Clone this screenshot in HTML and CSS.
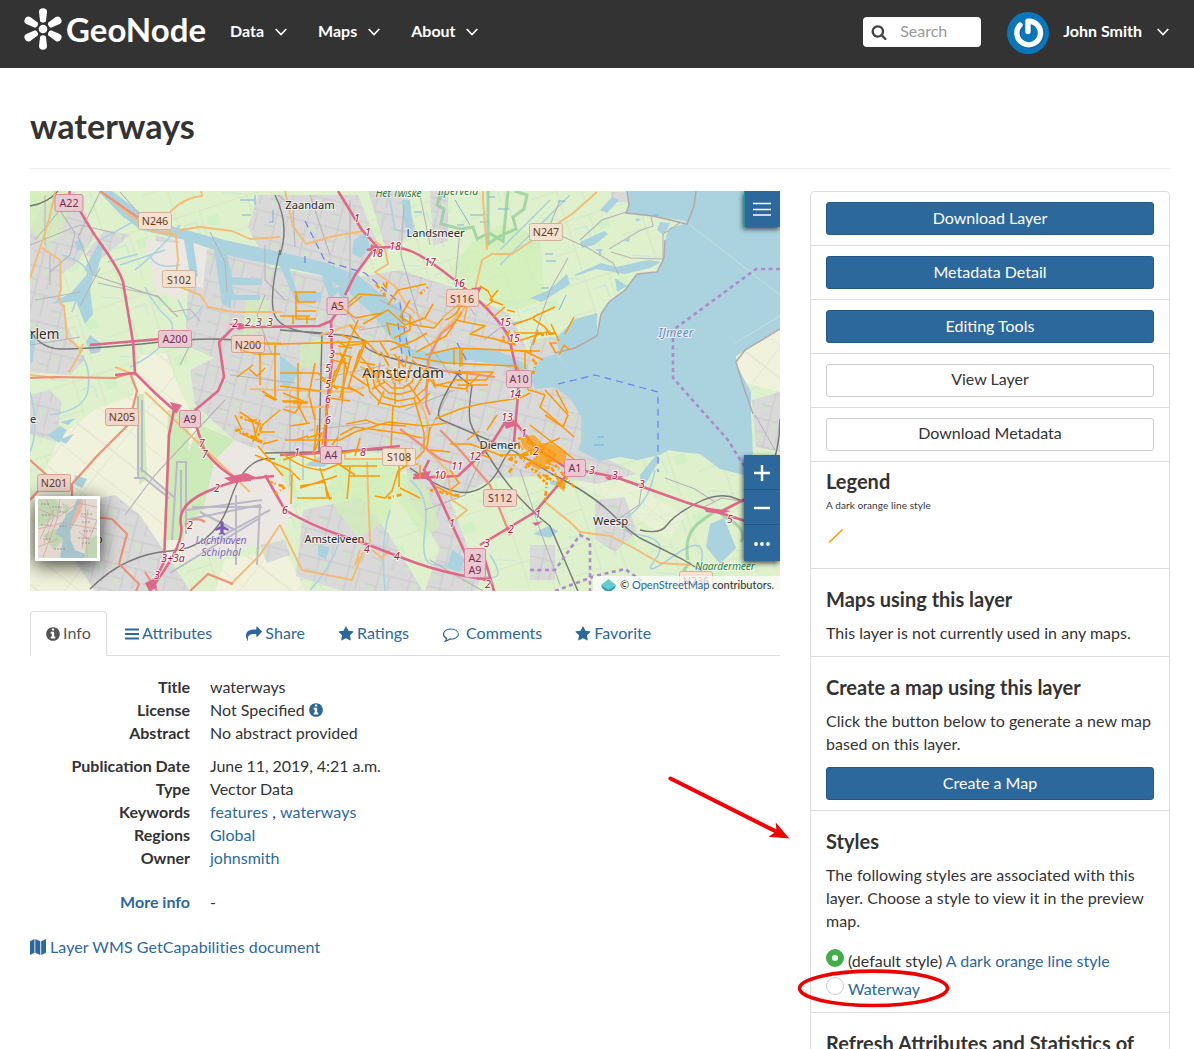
FILE: index.html
```html
<!DOCTYPE html>
<html lang="en">
<head>
<meta charset="utf-8">
<title>waterways - GeoNode</title>
<link rel="stylesheet" href="styles.css">
</head>
<body>
<svg width="0" height="0" class="defs" aria-hidden="true">
  <symbol id="i-info" viewBox="0 0 1792 1792"><path d="M1152 1376v-160q0-14-9-23t-23-9h-96v-512q0-14-9-23t-23-9h-320q-14 0-23 9t-9 23v160q0 14 9 23t23 9h96v320h-96q-14 0-23 9t-9 23v160q0 14 9 23t23 9h448q14 0 23-9t9-23zm-128-896v-160q0-14-9-23t-23-9h-192q-14 0-23 9t-9 23v160q0 14 9 23t23 9h192q14 0 23-9t9-23zm640 416q0 209-103 385.5t-279.5 279.5-385.5 103-385.5-103-279.5-279.5-103-385.5 103-385.5 279.5-279.5 385.5-103 385.5 103 279.5 279.5 103 385.5z"/></symbol>
  <symbol id="i-star" viewBox="0 0 1792 1792"><path d="M1728 647q0 22-26 48l-363 354 86 500q1 7 1 20 0 21-10.500 35.500t-30.500 14.500q-19 0-40-12l-449-236-449 236q-22 12-40 12-21 0-31.500-14.500t-10.500-35.500q0-6 2-20l86-500-364-354q-25-27-25-48 0-37 56-46l502-73 225-455q19-41 49-41t49 41l225 455 502 73q56 9 56 46z"/></symbol>
  <symbol id="i-share" viewBox="0 0 1792 1792"><path d="M1792 640q0 26-19 45l-512 512q-19 19-45 19t-45-19-19-45v-256h-224q-98 0-175.500 6t-154 21.500-133 42.500-105.500 69.500-80 101-48.500 138.500-17.500 181q0 55 5 123 0 6 2.500 23.500t2.500 26.500q0 15-8.500 25t-23.500 10q-16 0-28-17-7-9-13-22t-13.500-30-10.500-24q-127-285-127-451 0-199 53-333 162-403 875-403h224v-256q0-26 19-45t45-19 45 19l512 512q19 19 19 45z"/></symbol>
  <symbol id="i-comment" viewBox="0 0 1792 1792"><path d="M896 384q-204 0-381.500 69.500t-282 187.500-104.500 255q0 112 71.500 213.500t201.500 175.500l87 50-27 96q-24 91-70 172 152-63 275-171l43-38 57 6q69 8 130 8 204 0 381.500-69.500t282-187.500 104.500-255-104.500-255-282-187.500-381.500-69.500zm896 512q0 174-120 321.500t-326 233-450 85.500q-70 0-145-8-198 175-460 242-49 14-114 22h-5q-15 0-27-10.500t-16-27.500q-3-5 6-31l13-18q7-8 46-51t68-86 59-136q-157-89-247.500-220t-90.500-281q0-174 120-321.500t326-233 450-85.500 450 85.500 326 233 120 321.500z"/></symbol>
  <symbol id="i-search" viewBox="0 0 1792 1792"><path d="M1216 832q0-185-131.500-316.500t-316.500-131.500-316.500 131.500-131.500 316.500 131.500 316.500 316.500 131.500 316.500-131.500 131.500-316.500zm512 832q0 52-38 90t-90 38q-54 0-90-38l-343-342q-179 124-399 124-143 0-273.500-55.500t-225-150-150-225-55.500-273.500 55.500-273.500 150-225 225-150 273.500-55.500 273.500 55.500 225 150 150 225 55.500 273.500q0 220-124 399l343 343q37 37 37 90z"/></symbol>
  <symbol id="i-bars" viewBox="0 0 14 14"><path d="M0 1.500h14v2H0zM0 6h14v2H0zM0 10.500h14v2H0z"/></symbol>
  <symbol id="i-map" viewBox="0 0 16 16"><path d="M0 2.200 4.500 0v13.800L0 16zM5.300 0l5 2.200V16l-5-2.200zM11.200 2.200 16 0v13.800L11.200 16z"/></symbol>
  <symbol id="i-down" viewBox="0 0 12 8"><path class="chev" d="M.7 1 6 6.500 11.300 1"/></symbol>
</svg>

<header class="navbar">
  <a class="brand">
    <svg width="40" height="44" viewBox="0 0 40 44">
      <g fill="#fff"><circle cx="20" cy="22" r="4.300"/>
      <path id="petal" d="M16 5Q16 1.300 20 1.300T24 5L22.900 14.500Q20 16.800 17.100 14.500Z"/>
      <use href="#petal" transform="rotate(60 20 22)"/><use href="#petal" transform="rotate(120 20 22)"/><use href="#petal" transform="rotate(180 20 22)"/><use href="#petal" transform="rotate(240 20 22)"/><use href="#petal" transform="rotate(300 20 22)"/></g>
    </svg>
    <span class="brand-name">GeoNode</span>
  </a>
  <nav class="menu">
    <a>Data <svg class="caret"><use href="#i-down"/></svg></a>
    <a>Maps <svg class="caret"><use href="#i-down"/></svg></a>
    <a>About <svg class="caret"><use href="#i-down"/></svg></a>
  </nav>
  <div class="search"><svg class="icon"><use href="#i-search"/></svg><span>Search</span></div>
  <svg class="avatar" viewBox="0 0 42 42"><circle cx="21" cy="21" r="21" fill="#0a76bb"/><path d="M13 13A11.800 11.800 0 1 0 21 9.200V19.500" fill="none" stroke="#075a91" stroke-width="5.600" stroke-linecap="round" stroke-linejoin="round" transform="translate(1 1)" opacity=".6"/><path d="M13 13A11.800 11.800 0 1 0 21 9.200V19.500" fill="none" stroke="#fff" stroke-width="5.400" stroke-linecap="round" stroke-linejoin="round"/></svg>
  <a class="user">John Smith <svg class="caret"><use href="#i-down"/></svg></a>
</header>

<main class="page">
  <h2 class="title">waterways</h2>
  <div class="columns">
    <section class="main">
      <div class="map">
        <svg class="canvas" width="750" height="400" viewBox="30 191 750 400">
          <defs>
            <pattern id="urban" width="31" height="27" patternUnits="userSpaceOnUse" patternTransform="rotate(14)"><rect width="31" height="27" fill="#d9d9d9"/><path d="M0 6H31M11 0V27M0 19H11M22 6V27" stroke="#c8c6c8" fill="none" stroke-width=".9"/><path d="M15 9h4v4h-4zM3 21h4v3H3z" fill="#cde8c0"/></pattern>
            <pattern id="farm" width="74" height="62" patternUnits="userSpaceOnUse" patternTransform="rotate(-18)"><rect width="74" height="62" fill="#def1cc"/><path d="M0 14H74M26 0V62M50 14V62M0 44H26" stroke="#d0dfc5" fill="none" stroke-width=".8"/><path d="M4 4l18 7M31 24h13v13" stroke="#b9dcdd" fill="none" stroke-width=".7"/><path d="M55 22h12v10H55z" fill="#d2f0c6"/></pattern>
            <pattern id="polder" width="46" height="52" patternUnits="userSpaceOnUse" patternTransform="rotate(38)"><rect width="46" height="52" fill="#f0f2dc"/><path d="M0 0H46M0 0V52M0 26H46" stroke="#d8dbc9" fill="none" stroke-width=".9"/></pattern>
          </defs>
          <rect x="30" y="191" width="750" height="400" fill="url(#farm)"/>
          <g fill="url(#polder)">
            <path d="M140 355l26-2 14 37 32 65-30 90-40 46H30v-85l30-70 35-26 38-15Z"/>
            <path d="M780 329 745 350 736 362 742 382 780 392ZM225 560l60-10 20 41h-90Z"/>
            <path d="M575 470l50 10 60 35-15 25-60-40-30-15Z" fill-opacity=".5"/>
          </g>
          <g fill="url(#urban)">
            <path d="M30 230 42 205 75 192 95 235 78 262 60 275 62 300 68 328 84 360 70 375 30 372ZM30 395l20-5 12 12-6 40-26-8Z"/>
            <path d="M85 255l20-25 25 5-30 25ZM155 235l115 30-10 105-30-5-45-20 4-75-30-15Z"/>
            <path d="M258 195h100l20 50-20 30-95-18-15-30ZM368 191h38l10 40-30 20ZM430 191h18v50l-15 5Z"/>
            <path d="M248 262 340 280 400 270 460 290 510 315 530 355 545 400 560 440 560 475 495 478 450 500 480 580 475 591 425 591 440 548 410 500 405 455 340 450 290 455 240 445 195 405 190 370 230 350Z"/>
            <path d="M303 510l58-12 27 35 35 58h-80l-47-15ZM60 505l55-10 25 20 30 45 20 31H95l-20-30ZM595 500l30-3 12 35-22 20-20-13Z"/>
            <path d="M530 340l28-4 22 45 25 36 2 42 30 15-40 10-55-10ZM610 192h18v9l-15 2ZM752 400l28-8v60l-24-5Z"/>
            <path d="M120 555h15l4 5-4 12-12 3ZM260 545l25-5 5 15-23 8ZM530 545h25v35h-25Z"/>
          </g>
          <path d="M30 191h40l-8 45-20 10-12-20ZM335 455l60 8-5 55-32 20-30-40ZM240 455l50 3 10 50-30-5ZM395 470l30 15 15 40-15 15-30-45ZM300 345l24-8-5 28-20 4ZM245 300l25 0-5 30-22 5ZM470 245l30-20 40 10 5 65-30 10-45-15-20-25Z" fill="#d2edb8" fill-opacity=".75"/>
          <path d="M210 430l60 25 25 45-15 40-95 20-10-35ZM145 240l55 5-18 53-25-5ZM178 230l30 12-5 46-18-3Z" fill="#ebe7e2"/>
          <path d="M168 410h22l-6 130h-20ZM136 394l8 0 3 85-8 6ZM200 425l35 15-20 20-12 50-25 20 2-60Z" fill="#cdebb8"/>
          <!-- water -->
          <g class="water">
            <path d="M627 191 629 205 626 213 653 216 684 221 688 223 669 228 665 240 664 258 657 273 637 274 625 290 609 302 601 313 597 333 583 339 574 330 575 319 570 332 576 360 576 371 565 368 557 354 542 358 529 374 535 389 554 387 570 398 582 418 583 437 578 450 600 461 620 457 637 460 660 455 669 450 680 452 700 454 720 469 744 475 753 454 751 414 751 392 737 366 736 356 780 329V191Z"/>
            <path d="M98 191h14l38 29 65 18 65 14 47 11 33 14 37 30 14 42 19 3 40-4 30 4 28 13v10l-28-10-30-5-30 5-35-9-12-15-22-28-27-25-24-13-42-9-43-9-50-17-44-10-20-15Z"/>
            <path d="M575 319l22-6 0 18-22 42-12-5-7-30Z"/>
            <path d="M183 234h9l6 42-7 4ZM212 236l12 4 8 37 30 2v6h-30l3 10h25v5h-29v8l-9-4ZM276 257l9-2 12 37h24v10h-25Z"/>
            <path d="M322 278l7-4 5 14 16-3-3 7 5 14-8-3-6-11-8 7ZM352 270l12 10-8 8-10-10ZM354 240l12-8 4 16-10 10-8-5ZM360 292l18 10-6 10ZM385 310l14-8 8 20-8 14Z"/>
            <path d="M30 330l6 4-3 28-3 1ZM72 292l16-19 7-4-5 20 3 25-8 10-9-23-25 3ZM84 270l15-28 5 2-8 32ZM74 242l7-2 4 8-7 3ZM90 335l12 9-2 8-9 2-5-12ZM58 440l16-6-8 10ZM75 475l12 4-5 9-8-4ZM305 465l20-12 8 8-10 6-14-1ZM48 435l12-9 7 4-8 13ZM60 422l16-4-8 7Z"/>
            <path d="M530 298l19-8 18-16 3 10-28 18ZM574 275l27-12 15 4 32-7 13 2-11 6-25 6-29-5-20 7ZM600 210l12-13 7 3-12 13ZM580 242l24-11 4 3-14 11-12 3ZM595 249l8 0-3 4ZM660 222l10 1-6 12-7-5ZM635 218l6 1-4 3ZM624 241l6-4-1 5ZM615 278l12 8-10 6ZM452 549l13 10-5 13-13-4ZM318 545l12 2-4 12-8-3ZM640 475l16-20 4 4-19 33ZM710 524l14-6 12 30-16 16-14-17ZM533 534l15-8 10 5-8 7ZM550 480l16 3-3 5-13-4ZM402 200l8 0 3 30-8-3ZM280 355l20 16-13 20-7-10Z"/>
            <path class="stream" d="M275 270l30-10M100 240l40-22M62 255q40 12 18 35l-8 22M180 225q-20 25-45 45M108 262l30-8M145 287q10 20 22 30t-2 25-35 25M30 452q10-25 0-60M50 415q35-5 38-25t-6-35M410 480q20 15 15 50t10 35 45 10 10-20M582 400v50M655 470q-5 30-25 45t10 20 15 25 20-5 25 15M390 510q-10 30-5 81M340 540q-10 30-30 50M500 250l50-50M500 265l70-70M390 200l5 30 40 5M180 265q-25 5-30-10M165 250l-45 15M203 305q-5 10-15 15l-10-20"/>
          </g>
          <path class="ditch" d="M240 200h14m-12 15h9m18 7h4m-18-27v10m18 5v12M385 195h7m22 17h8m35 13h7m16-3h9m-1-25h7m3 12h11M470 215h13M545 254h8m-7 7h10M541 288h8M600 252v4M558 201h7M654 215h5M566 295l-7 15M597 437h7m-10 8h10M455 200l15 25"/>
          <!-- nature reserve edge -->
          <path class="reserve" d="M441 191l-4 14 7 4-3 15 20 5 12-2 4 12 12-6 14 8 5-50M515 191l12 4-3 14-11 8 3 12-18 8-10 7V191M688 560q-5-25 12-38t18-11 15 11 8 20M690 562l-6 8 15 16h55"/>
          <!-- minor roads -->
          <g class="minor">
            <path d="M55 203l20 30-5 22-20 17M100 192l-22 45 15 38 65 22 20 20M120 192l35 40M100 268l-20 38M98 283l60 13 14 16 18-3 10 12M190 345l-10 20M90 344l60-3M285 300l-20-20v-35M265 295l-8 20 15 40M290 391v95M315 380l70-15M310 430l60-7M335 460l10-80M303 430v50M340 300l20 30 30-5M380 300l30 15 40 60M405 410l50-20M420 450l30-60M530 350l20-60 18-32M560 200l-12 30 40 18 25 15 6 12M580 240l22-20 24-8M609 249l30-18 14-5-2-10M611 252l20 6 32 1 0-25 18-12M484 340l20-15 24-5M430 560l25 15 28 16M425 510l40-15 15-35M520 470l20 60 20 55M620 478l22 7-3 20-22 15 15 15M665 478l30 11 20 13M702 508l20-10 30 5M755 415l20 35"/>
            <path d="M210 232l15 30 2 30M278 195l15 12 2 40M420 195l10 50M404 205l-3 50 20 70M460 230l-5 55 20 30M350 200v90M310 195l20 60M230 375l65 8M440 200l5-8"/>
            <path d="M30 245l50-20 35 8M50 255v30M35 300l45-8M30 345l50-8M45 195v50M60 210l-25 30M225 400l-70 75-30 40"/>
          </g>
          <path class="coast" d="M627 191 629 205 626 213 653 216 687 224 694 206 696 191M665 240l-1 18-7 14-20 2-12 16-16 12-8 12-4 22-22 12-20 5M780 329 745 350 736 362 742 382 753 414"/>
          <path class="ferry-route" d="M690 225l90 70M735 343l45-27"/>
          <!-- railways and runways -->
          <path class="runway" d="M138 396v82M142 400v72M134 478h10l25 20M140 468l35 30M172 540l5-78h9v72M181 470v50M187 510l75-10M185 520l75-15-3 60M236 495v70M170 573l90-55M192 507h70M200 512l35 18M205 545l65-35"/>
          <path class="rail" d="M58 191q-10 12-28 15M30 330q10 18 30 19 35 0 100-7t100 2M280 250q-12 50-5 66t50 18 40 10 50 20 45 10 12 12q-4 25-2 35t25 45 55 60l30 70M280 330l42 3-3 120M275 195q15 30 5 60M265 453l50-1 80-3M90 589q35-35 80-38t60-50 45-42M410 468q40 28 60 24t30-25 20-24M460 370q-30 45-18 50t70 30l40 24q40 20 60 40t30 25l40 20 20 12M640 530q20 5 27-5t30-22 40-4 30-20 13-60"/>
          <!-- secondary roads -->
          <path class="secondary" d="M55 191q-3 20-11 45l-14 42M42 248l18 12 1 30q-6 10 3 16l3 32 15 12-13 22M30 375l25 3M83 344l-3 8M170 212q15-15 32-16l-1-5M101 191l30 25 20 15 25 4 2 25-3 25 25 10 8 12 25 5h48M176 235l-12-6M180 230l20-3 32 4 18 8 30-2M285 191l8 35 13 18 28-8 30-5M375 241l10 8 3 15-13 8 20 14 12 20 15 12 15 6M487 250l-4-50V191M475 290l7-30 10-6h20l60-40 25-22M475 290l-12 20-20 20-10 12M250 389l100 3 15-5M285 407h45M315 408v55M367 462l3 80-15 23 5-15M337 449l8 5v5h48M427 448q5-30-10-50M425 448l22 22 5 30 15 10-12 10M280 525l22 45 25 5 25 5 12-30M390 550l-8 8-10-8M545 502l25 20 10 10 30 4 20 10 30 17 30 2M230 585l30-30 20-30M135 375l-20-8M320 335l30-10 15 3M145 392l105 100"/>
          <path class="primary" d="M100 191l40 28M30 378l25-1 60 1 15-5 7 18-5 20 0 10-35 35-25 28 0 30 40 5 15 15-8 30 20 20-5 12M30 460l20 18M400 429l40 30 15 5M440 430l20 20 30 35 20 50M435 345l-7 15-2 45 4 10M455 322l-14 12-10 18M435 370l30 3 30 4M30 500l18-20M185 525q10-10 20-3M190 591l18-17 25 10M145 572l12 19"/>
          <!-- motorways -->
          <path class="motorway" d="M70 191l-5 20M76 203q10 20 27 44t20 35l10 60 2 31 20 20 19 17-5 25-5 127-20 41M135 373l-20 2M194 411l24-20 6-14-5-35 15-15h25l60-1 12-5 14-20M90 345l70-6M338 191l24 39 20 22M377 245l-22 30-10 20M331 320l1 40-5 45-2 45M367 250q30-8 52 5t50 37 40 45l10 45-5 60M280 455l60-3 60-6M429 460l-5 10 12 20 30 65 20 15M480 545l55-33 30-35 5-8M413 478l45-2 32-30 16-25M196 425l8 25q15 20 35 30l35-4M150 590q35-45 31-65t25-33 45-12M265 475l20 35q25 15 55 25t60 22 60 18 30 4M515 422l20 25 30 20 50 10 70 25 45 14 15 5M722 511l35-18M485 560l9 31"/>
          <g fill="#dc6989"><path d="M371 244l10 6-1 6-10-5ZM224 478l22-5 12 5-25 5ZM413 474l18-3-4 8-12-2ZM503 422l10-3 4 6-11 4ZM703 507l28 4-10 3-15-2ZM532 523l11-2-7 5ZM170 402l12 3-6 9ZM472 288l10-1-3 6-9-2ZM229 324l12-1 8 4-10 3ZM605 477l18-1-5 4-10 0ZM480 578l11-1-5 5ZM145 583l10-5 2 10-8 3Z"/></g>
          <!-- boundaries and ferries -->
          <path class="boundary" d="M780 269h-24l-83 61v48l55 62 16 26M530 570h25l25-35 10 5v51M555 591l40-15 30-7 35 25"/>
          <path class="ferry" d="M305 221l20 40 40 12 35 30 6 35 4 18M558 384l37-9 63 17v80M305 256v10M457 343l10 18M398 323l5 40"/>
          <!-- waterways layer -->
          <g class="layer">
            <path d="M294 292h22M316 302h-18l-2-10v27h20M296 311h20M280 316h30M293 316v8M307 316v8M246 344h35M260 345v40M275 345v55M258 354h22M249 369l8 7 8-8M237 377l16-12M265 395l10 5M330 297l25 21 27-5M347 308l15-12M350 325l15 20M345 306l14-12 27 2M363 324l25-14 17 15 20-7 8-14M388 305l10-15M398 290l28-6M410 300l-10 17 14 8 20 3 9-10M383 283l3 5 1-6M390 335l-3-12 20 5M410 315v15l-16 8"/>
            <path d="M452 300l6-4 5 6-7 12M445 320q15-5 16-20M455 320l30 6-15 8 25 5 15 5M480 286l8 5 5 10-9 7M498 290l-8 10 13 5M505 307l-12 10M515 312l-8-2M513 325l22-8M514 333h30M515 342l22-7M520 351h20M533 319l12 8 5 8M538 330l-5 15M533 317l22-10M530 337l20-6M557 343h-7l6 10M559 355l5-10 6 5M565 334l9-17M551 324l8 17"/>
            <path d="M390 350l25-10 12-7M416 352l30-16 16-24M280 344l110-3 20 7M380 356l-15-16-7 18M412 357l35 6 70 3 12 25M425 355l30-7 70 3 18 9M430 370l5 15 30 4 15-15M454 348v17M460 349v18M462 348v18M525 351v18M450 372h43l-7 8h-32M458 385h30M467 372v20"/>
            <path d="M358 320l-7 17-17 45M340 334l10 5-18 42M337 341l8 5 22-3M338 346l14 2M334 353l18 4M332 360l18 4M280 373h38l12 12 25 5M298 363v38h-16M315 363l-6 32 6 25M283 402h25M345 358l-3 45M335 370l-8 40-5 35M340 352l8 20M351 356l-11 42M360 350l-12 38M366 342l-12 30M380 342l10 16M394 354l10 13M285 440h55l15-8 34-10 35 4 23-3M393 406l-2 40M340 435l15-8 45 6 22 5"/>
            <path d="M372 374l3 13 9 10 14 4 16-3 11-9 5-12M376 372l4 13 9 8 12 1 13-4 8-12M381 370l3 11 8 7 11 0 9-6 4-10M387 368l3 9 9 4 9-5 2-8M366 376l4 16 11 11 18 4 19-4 12-10M395 383v21M384 391l-6 14M408 384l13 18M371 374l18-2M372 389l13-7M424 369l10 6M399 356v12M407 356l-2 11M389 366l-8-14M375 365l-15-3M433 386l22-5M412 360l14 12 10 16M350 374l18 12M348 386l16 10M360 356l12 14"/>
            <path d="M414 398l10 35v18l-10 10-16 10-6 20-7 7-10-2M430 427l-3 20M435 419l25-10 20-5 40-6 10-5M450 444l20 0 30 11 20 0 40-17M475 452l17 7M430 450l20 2M450 470l9 13-10 8M435 486l20 10M420 465v14M487 430l10-15M467 440l12-9M399 465v22M400 488l20 10M398 461l5 5 15-2"/>
            <path d="M240 412l15 10M235 415l7 15M245 420h12M240 433l22 10M252 420l5 20M260 420l-7 22M260 432h15M263 444l15-4M280 410l-20 17M258 446l25 30M255 455l35 15 10 10M283 460l15-5 25 8 15-5M282 453q20 17 42 17l18-7M292 474l-1 30M300 486l25-4 2 15M297 498h35M320 468l10 32M300 488l37-12M350 476h30M350 467l-3 32M342 466h35M337 454l23-4M332 445l6-8M340 450v15l15 10M262 391l15 9"/>
            <path d="M530 390l15 5-5 12 14 12 20 18M545 390l23 25-5 12-18-12M556 390l12 23M530 425l45 35"/>
            <path d="M318 425l-5 30M297 403l10 20M307 438l15-5-7 17M295 440l13-4M360 438l-5 18M280 386l40 5M283 393l20 8-8 12-12-4M293 403h15M290 426l20-3M330 398l20 3M320 379l18 10M346 424l20-4 10 4 30 2"/>
          </g>
          <path d="M520 437l14-2 8 8 15 2 10 7-2 12-16-2-10 8-10-6 8-8-14-8ZM556 476l10 6-2 10-6-6Z" class="dense"/>
          <path class="speckle" d="M518 438l38 15-10 15-25-12 20-5-16 17M540 445l18 35M520 457l25 25M535 470l30 18M550 450l-5 50M555 465l19 22M510 458l30-6M240 417l22 8-5 14-20-10M235 430l30 13M270 482l15 5-10 7M500 455l16 7-8 12M430 490l30 6M502 340l12 4-5-12-6 6M385 295l-10-12M420 294l8-7M530 350l4 12M536 362l-3 12M541 335l15-2M388 498l15-4"/>
          <!-- road shields -->
          <g class="shield">
            <g class="a"><rect x="55" y="194.500" width="28" height="17"/><rect x="158.500" y="330.500" width="33" height="17"/><rect x="327" y="297.500" width="21" height="17"/><rect x="506.500" y="370.500" width="25" height="17"/><rect x="179.500" y="410.500" width="21" height="17"/><rect x="320.500" y="446.500" width="21" height="17"/><rect x="564.500" y="459.500" width="21" height="17"/><rect x="464.500" y="548.500" width="21" height="29"/></g>
            <g class="n"><rect x="231.500" y="335.500" width="33" height="17"/><rect x="105.500" y="408.500" width="33" height="17"/><rect x="37.500" y="474.500" width="33" height="17"/><rect x="446.500" y="289.500" width="32" height="17"/><rect x="483.500" y="489.500" width="33" height="17"/></g>
            <g class="s"><rect x="138.500" y="212.500" width="33" height="17"/><rect x="162.500" y="270.500" width="33" height="17"/><rect x="529.500" y="223.500" width="33" height="17"/><rect x="382.500" y="448.500" width="33" height="17"/><rect x="679.500" y="571.500" width="33" height="17"/></g>
          </g>
          <g class="ref a-text"><text x="69" y="207">A22</text><text x="175" y="343">A200</text><text x="337.500" y="310">A5</text><text x="519" y="383">A10</text><text x="190" y="423">A9</text><text x="331" y="459">A4</text><text x="575" y="472">A1</text><text x="475" y="561.500">A2</text><text x="475" y="573.500">A9</text></g>
          <g class="ref"><text x="248" y="349">N200</text><text x="122" y="421">N205</text><text x="54" y="487">N201</text><text x="462" y="303">S116</text><text x="500" y="502">S112</text><text x="155" y="225">N246</text><text x="179" y="284">S102</text><text x="546" y="236">N247</text><text x="399" y="461">S108</text><text x="696" y="585">N236</text></g>
          <g class="layer over"><path d="M248 343h33M240 350l20 5M335 302l15 12M443 317l15-12 9 2-3 14M405 448l2 18M545 462l15 6"/></g>
          <!-- exits -->
          <g class="exit"><text x="235" y="327">2</text><text x="248" y="326">2</text><text x="259" y="326">3</text><text x="270" y="326">3</text><text x="357" y="222">1</text><text x="368" y="236">1</text><text x="377" y="257">18</text><text x="395" y="250">18</text><text x="430" y="266">17</text><text x="459" y="287">16</text><text x="505" y="326">15</text><text x="514" y="342">15</text><text x="515" y="398">14</text><text x="507" y="421">13</text><text x="331" y="337">2</text><text x="332" y="358">3</text><text x="328" y="372">5</text><text x="328" y="388">5</text><text x="328" y="403">6</text><text x="328" y="424">6</text><text x="297" y="456">1</text><text x="363" y="456">8</text><text x="440" y="479">10</text><text x="457" y="470">11</text><text x="475" y="460">12</text><text x="524" y="437">1</text><text x="536" y="455">2</text><text x="592" y="474">3</text><text x="615" y="479">3</text><text x="642" y="488">3</text><text x="730" y="523">5</text><text x="202" y="447">7</text><text x="205" y="458">7</text><text x="217" y="492">2</text><text x="190" y="529">2</text><text x="182" y="551">2</text><text x="173" y="562">3+3a</text><text x="157" y="579">3</text><text x="285" y="514">6</text><text x="367" y="553">4</text><text x="397" y="560">4</text><text x="488" y="588">2</text><text x="487" y="547">3</text><text x="511" y="533">2</text><text x="452" y="527">1</text><text x="538" y="518">1</text></g>
          <!-- places -->
          <g class="place"><text x="310" y="209">Zaandam</text><text x="435.500" y="237" textLength="58">Landsmeer</text><text x="334.500" y="543" textLength="60">Amstelveen</text><text x="610.500" y="525">Weesp</text><text x="500" y="449">Diemen</text><text x="403" y="378" class="city" textLength="82">Amsterdam</text><text x="30" y="339" class="start">rlem</text><text x="30" y="423" class="start small">e</text><text x="96" y="543" class="start small">o</text></g>
          <g class="layer over"><path d="M362 378l12-10M368 366l12 16M380 363l-3 20M389 369l5 15M411 364l-5 18M430 362l-10 18M360 367l10 3M400 384l-3-15M518 442l5 8"/></g>
          <g class="park"><text x="398.500" y="197" textLength="46">Het Twiske</text><text x="458" y="195">Ilperveld</text><text x="725" y="569.500" textLength="60">Naardermeer</text></g>
          <g class="lake"><text x="676" y="337" textLength="35">IJmeer</text></g>
          <g class="airport"><text x="221" y="544" textLength="51">Luchthaven</text><text x="221" y="556">Schiphol</text><path d="M222 521l1.300 1.300V526l5 3v1.500l-5-1.500v3.500l1.700 1.200v.8l-3-.8-3 .8v-.8l1.700-1.200V529l-5 1.500V529l5-3v-3.700Z"/></g>
        </svg>
        <a class="map-menu"><svg width="18" height="14" viewBox="0 0 18 14"><path d="M0 1.500h18M0 7.500h18M0 13h18" stroke="#fff" stroke-width="1.500"/></svg></a>
        <div class="zoom">
          <a><svg width="16" height="16" viewBox="0 0 16 16"><path d="M8 0v16M0 8h16" stroke="#fff" stroke-width="2.400"/></svg></a>
          <a><svg width="16" height="16" viewBox="0 0 16 16"><path d="M0 8h16" stroke="#fff" stroke-width="2.400"/></svg></a>
          <a><svg width="18" height="16" viewBox="0 0 18 16"><g fill="#fff"><circle cx="3" cy="8" r="1.900"/><circle cx="9" cy="8" r="1.900"/><circle cx="15" cy="8" r="1.900"/></g></svg></a>
        </div>
        <div class="overview">
          <svg width="59" height="59" viewBox="0 0 59 59"><rect width="59" height="59" fill="#e2dad0"/><path d="M0 0h18l6 12-12 10L0 28ZM5 36l15-7 6 10-10 12ZM48 42l11-6v23H46ZM24 4l8 3-4 12Z" fill="#c0d5b2"/><path d="M39 0h5l-5 20-7 12 1 10 4 9 10 4v4H22l3-20-8-4 12-20 6-5Z" fill="#a7c4ca"/><path d="M46 1l-3 12-10 15 2-10 8-17Z" fill="#eab69e"/><path d="M0 10l20 8 20-14 19 4M5 58l15-40M0 30l25-6 34 6M8 0l8 18-10 26M42 17l17 4-8 20-10-8M22 0l-3 20M47 0l2 58M0 48l20-8M2 40l14-30M50 10l-6 40" fill="none" stroke="#d3a5a3" stroke-width=".8"/><path d="M3 5h8m3 3h10m-20 8h9m8-3h7m-25 13h10m8 1h7m15-12h11m-10 8h9m-8 9h10m-50 8h8m3 10h11m13-11h12m-8 5h8" stroke="#85828a" stroke-width=".7" stroke-dasharray="2 1"/></svg>
        </div>
        <div class="credit"><svg width="15" height="14" viewBox="0 0 15 14"><path d="M0 6l7.500-6L15 6 7.500 12Z" fill="#64cbd2"/><path d="M0 6l7.500 5L15 6l-1.500 3.500L7.500 14l-6-4.500Z" fill="#2ca0b2"/></svg><span>© <a>OpenStreetMap</a> contributors.</span></div>
      </div>

      <ul class="tabs">
        <li class="active"><svg class="icon"><use href="#i-info"/></svg>Info</li>
        <li class="t-attr"><svg class="icon bars"><use href="#i-bars"/></svg>Attributes</li>
        <li class="t-share"><svg class="icon"><use href="#i-share"/></svg>Share</li>
        <li class="t-rate"><svg class="icon"><use href="#i-star"/></svg>Ratings</li>
        <li class="t-comm"><svg class="icon"><use href="#i-comment"/></svg>Comments</li>
        <li class="t-fav"><svg class="icon"><use href="#i-star"/></svg>Favorite</li>
      </ul>

      <dl class="meta">
        <dt>Title</dt><dd>waterways</dd>
        <dt>License</dt><dd>Not Specified <svg class="icon info"><use href="#i-info"/></svg></dd>
        <dt>Abstract</dt><dd>No abstract provided</dd>
      </dl>
      <dl class="meta">
        <dt>Publication Date</dt><dd class="date">June 11, 2019, 4:21 a.m.</dd>
        <dt>Type</dt><dd>Vector Data</dd>
        <dt>Keywords</dt><dd class="keywords"><a>features</a> , <a>waterways</a></dd>
        <dt>Regions</dt><dd><a>Global</a></dd>
        <dt>Owner</dt><dd><a>johnsmith</a></dd>
      </dl>
      <dl class="meta more"><dt><a>More info</a></dt><dd>-</dd></dl>
      <a class="wms"><svg class="icon"><use href="#i-map"/></svg>Layer WMS GetCapabilities document</a>
    </section>

    <aside class="side">
      <div class="item"><a class="btn primary">Download Layer</a></div>
      <div class="item"><a class="btn primary">Metadata Detail</a></div>
      <div class="item"><a class="btn primary">Editing Tools</a></div>
      <div class="item"><a class="btn">View Layer</a></div>
      <div class="item"><a class="btn">Download Metadata</a></div>
      <div class="item legend"><h4>Legend</h4><p>A dark orange line style</p><svg width="20" height="20" viewBox="0 0 20 20"><path d="M3 16.500 16.500 3.500" stroke="#ff9900" stroke-width="1.500"/></svg></div>
      <div class="item text uses"><h4>Maps using this layer</h4><p>This layer is not currently used in any maps.</p></div>
      <div class="item text create"><h4>Create a map using this layer</h4><p>Click the button below to generate a new map based on this layer.</p><a class="btn primary">Create a Map</a></div>
      <div class="item text styles"><h4>Styles</h4><p>The following styles are associated with this layer. Choose a style to view it in the preview map.</p>
        <div class="style-row"><i class="radio on"></i><span>(default style) <a>A dark orange line style</a></span></div>
        <div class="style-row"><i class="radio"></i><a>Waterway</a></div>
      </div>
      <div class="item text"><h4>Refresh Attributes and Statistics of this layer</h4></div>
    </aside>
  </div>
</main>
<svg class="marks" width="1194" height="1049" viewBox="0 0 1194 1049"><path d="M670.500 778.500 778 832.500" stroke="#f40000" stroke-width="4" stroke-linecap="round"/><path d="M789.300 838.500 768.300 836.700 776.500 831.500 775.700 822.500Z" fill="#f40000"/><ellipse cx="873.500" cy="988.300" rx="74" ry="17.200" fill="none" stroke="#ee0000" stroke-width="3.600"/></svg>
</body>
</html>
```

FILE: styles.css
```css
* { box-sizing: border-box; }
body { margin: 0; height: 1049px; overflow: hidden; position: relative; font: 16px/22.85px Lato, sans-serif; color: #333; background: #fff; }
a { color: #2c689c; text-decoration: none; }
h2, h4, p, ul, dl, dd { margin: 0; padding: 0; }
.defs { position: absolute; }
.icon { width: 16px; height: 16px; fill: currentColor; flex: none; }

.navbar { height: 68px; background: #333; display: flex; align-items: flex-start; padding-left: 23px; }
.brand { display: flex; padding-top: 7px; width: 207px; }
.brand-name { font-size: 33px; font-weight: 700; line-height: 44px; color: #fff; margin-left: 3px; }
.menu { display: flex; }
.menu a, .user { display: flex; align-items: center; height: 63px; color: #fff; font-weight: 700; font-size: 16px; }
.menu a { margin-right: 31px; }
.menu a:last-child .caret { margin-left: 10px; }
.caret { width: 12px; height: 8px; margin-left: 11px; }
.chev { fill: none; stroke: #fff; stroke-width: 1.6; }
.search { display: flex; align-items: center; width: 118px; height: 30px; margin: 17px 26px 0 auto; padding: 0 0 2px 8px; background: #fff; border-radius: 4px; color: #999; }
.search .icon { fill: #444; width: 16px; margin: 2px 13px 0 0; }
.avatar { width: 42px; height: 42px; margin: 12px 14px 0 0; }
.user { margin-right: 25px; }
.user .caret { margin-left: 15px; }

.page { padding: 0 24px 0 30px; }
.title { height: 101px; padding-top: 38px; font-size: 34.2px; line-height: 40px; font-weight: 700; border-bottom: 1px solid #eee; margin-bottom: 22px; }
.columns { display: grid; grid-template-columns: 750px 360px; column-gap: 30px; }

.map { position: relative; width: 750px; height: 400px; overflow: hidden; }
.canvas { display: block; }
.water path { fill: #aad3df; }
.water .stream { fill: none; stroke: #aad3df; stroke-width: 1.6; }
.ditch { fill: none; stroke: #5ba9df; stroke-width: .8; }
.reserve { fill: none; stroke: #86c695; stroke-width: 3; opacity: .65; }
.minor path { fill: none; stroke: #b9b4b8; stroke-width: 1.1; }
.coast { fill: none; stroke: #b2a9ae; stroke-width: 1.5; }
.ferry-route { fill: none; stroke: #c5dfe2; stroke-width: 1; }
.runway { fill: none; stroke: #bbb9c8; stroke-width: 2; }
.rail { fill: none; stroke: #777; stroke-width: 1.4; }
.secondary, path.primary, .motorway { fill: none; stroke-linejoin: round; }
.secondary { stroke: #f5bb75; stroke-width: 1.9; }
path.primary { stroke: #f09078; stroke-width: 2.2; }
.motorway { stroke: #e16788; stroke-width: 2.6; }
.boundary { fill: none; stroke: #ad8bc8; stroke-width: 2.6; stroke-dasharray: 4 3.5; }
.ferry { fill: none; stroke: #6d7df1; stroke-width: 1.2; stroke-dasharray: 7 5; }
.layer path { fill: none; stroke: #ff9900; stroke-width: 1.55; stroke-linejoin: round; }
.layer.over { opacity: .7; }
.dense { fill: #ff9900; opacity: .7; }
.speckle { fill: none; stroke: #ff9900; stroke-width: 2.6; stroke-dasharray: 3 2 1 3 5 2; }
.shield rect { rx: 2px; }
.shield .a rect { fill: #eac9d0; stroke: #d58ba3; }
.shield .n rect { fill: #f2d5ca; stroke: #d7a38d; }
.shield .s rect { fill: #f4e2d0; stroke: #d2b298; }
.canvas text { font-family: "Noto Sans", sans-serif; text-anchor: middle; }
.ref text { font-size: 10.7px; fill: #613c27; }
.a-text text { fill: #762b55; }
.exit text { font-size: 10.5px; font-style: italic; fill: #9d203d; stroke: #fff; stroke-width: 2px; paint-order: stroke; stroke-opacity: .75; }
.place text { font-size: 11.2px; fill: #292929; stroke: #fff; stroke-width: 2px; stroke-opacity: .6; paint-order: stroke; }
.canvas .place .city { font-size: 15px; }
.canvas .place .start { text-anchor: start; font-size: 13.5px; }
.canvas .place .small { font-size: 11px; }
.park text { font-size: 10.5px; font-style: italic; fill: #2c7e43; stroke: #fff; stroke-width: 2px; stroke-opacity: .5; paint-order: stroke; }
.lake text { font-size: 11.7px; font-style: italic; fill: #6087bd; stroke: #fff; stroke-width: 2px; paint-order: stroke; stroke-opacity: .7; }
.airport text { font-size: 10.5px; font-style: italic; fill: #7760b0; stroke: #fff; stroke-width: 1px; stroke-opacity: .5; paint-order: stroke; }
.airport path { fill: #765bb5; stroke: #765bb5; stroke-width: .5; }
.map-menu, .zoom { position: absolute; right: 0; background: #2c689c; box-shadow: -1px 2px 5px rgba(0,0,0,.7); }
.map-menu { top: 0; width: 36px; height: 36px; display: grid; place-items: center; padding: 0 2px 0 0; border-left: 1px solid #159a9c; }
.zoom { bottom: 30px; width: 36px; }
.zoom a { height: 35px; display: grid; place-items: center; padding-top: 2px; border-bottom: 1px solid #235a88; }
.zoom a:last-child { border: 0; height: 36px; }
.overview { position: absolute; left: 5px; top: 305px; width: 65px; height: 65px; border: 3px solid #fff; box-shadow: 0 4px 18px rgba(0,0,0,.75); }
.overview svg { display: block; }
.credit { position: absolute; right: 0; bottom: 0; height: 15px; width: 187px; padding: 0 6px 0 8px; display: flex; justify-content: space-between; align-items: center; background: rgba(255,255,255,.7); line-height: 15px; white-space: nowrap; }
.credit span { font-size: 11px; padding-top: 2px; }
.credit svg { margin-top: 4px; flex: none; }

.tabs { list-style: none; display: flex; margin-top: 20px; height: 45px; border-bottom: 1px solid #ddd; color: #2c689c; }
.tabs li { display: flex; align-items: center; height: 45px; letter-spacing: .05px; }
.tabs .active { width: 77px; padding-left: 14px; border: 1px solid #ddd; border-bottom-color: #fff; border-radius: 4px 4px 0 0; color: #555; }
.tabs .icon { margin-right: 2px; }
.tabs .bars { width: 14px; height: 14px; margin-right: 3px; }
.tabs .t-attr, .tabs .t-rate { letter-spacing: 0; font-size: 16.1px; }
.t-attr { margin-left: 18px; }
.t-share { margin-left: 34px; }
.tabs .t-share .icon { margin-right: 3px; }
.t-rate { margin-left: 33px; }
.t-comm { margin-left: 34px; }
.tabs .t-comm .icon { margin-right: 7px; }
.t-fav { margin-left: 33px; }
.tabs .t-rate .icon, .tabs .t-fav .icon { margin-right: 3px; }

.meta { display: grid; grid-template-columns: 160px 1fr; column-gap: 20px; margin-bottom: 11px; }
.tabs + .meta { margin-top: 20px; margin-bottom: 10.6px; }
.meta dt { text-align: right; font-weight: 700; }
.meta .info { color: #2c689c; vertical-align: -2px; margin-left: -1px; }
.meta .date { letter-spacing: -.08px; }
.meta .keywords { letter-spacing: .11px; }
.meta.more { margin-top: 21.2px; margin-bottom: 22.2px; }
.wms { display: flex; align-items: center; letter-spacing: .08px; }
.wms .icon { margin-right: 4px; }

.side { border: 1px solid #ddd; border-radius: 4px; }
.item { min-height: 54px; padding: 10px 15px; border-bottom: 1px solid #ddd; }
.btn { display: block; height: 33px; border: 1px solid #ccc; border-radius: 3px; text-align: center; line-height: 28px; color: #333; }
.btn.primary { background: #2c689c; border-color: #235a88; color: #fff; line-height: 30px; }
.item h4 { font-size: 20px; line-height: 22px; font-weight: 700; }
.legend { height: 107px; padding-top: 8px; }
.legend p { font-size: 10px; line-height: 12px; margin: 7px 0 15px; letter-spacing: .1px; }
.legend svg { display: block; }
.text h4 { margin: 9px 0 12px; }
.text p { letter-spacing: .03px; }
.uses { height: 88px; }
.create { height: 154px; }
.create .btn { margin-top: 11px; }
.styles { height: 202px; }
.style-row { display: flex; height: 28px; white-space: nowrap; }
.styles p { margin-bottom: 14px; }
.style-row span, .style-row a { line-height: 28px; }
.radio { width: 18px; height: 18px; border: 1px solid #ccc; border-radius: 50%; margin: 2px 4px 0 0; flex: none; }
.radio.on { border: 6px solid #41ad49; }
.marks { position: absolute; left: 0; top: 0; pointer-events: none; }
```
